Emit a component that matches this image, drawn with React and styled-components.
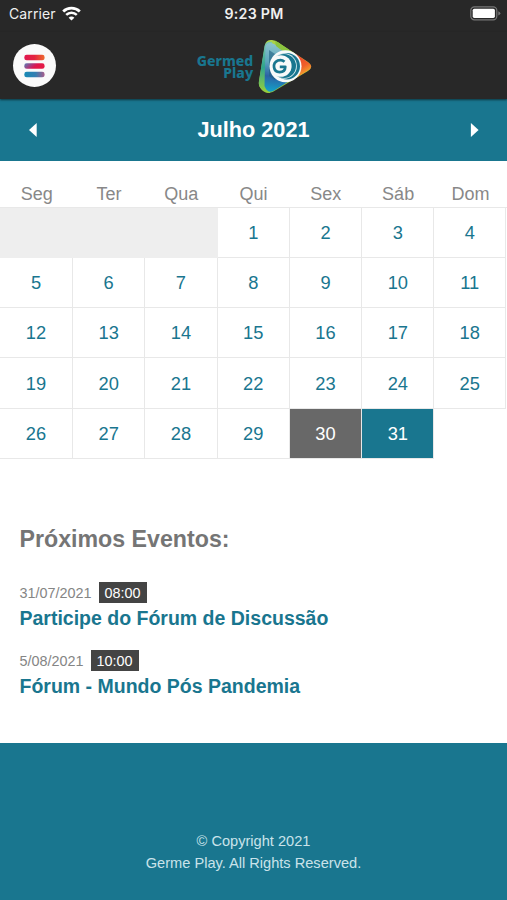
import React from "react";
import styled, { createGlobalStyle } from "styled-components";

const teal = "#19768f";
const dark = "#282828";

const GlobalStyle = createGlobalStyle`
  * { box-sizing: border-box; }
  body {
    margin: 0;
    background: #fff;
    font-family: "Liberation Sans", Arial, sans-serif;
  }
`;

const Screen = styled.div`
  display: flex;
  flex-direction: column;
  width: 507px;
  height: 900px;
  overflow: hidden;
  background: #fff;
`;

const StatusBar = styled.div`
  display: grid;
  grid-template-columns: 1fr auto 1fr;
  align-items: center;
  height: 32px;
  padding: 0 6px 5px 9px;
  background: ${dark};
  color: #f0f0f0;
  font-family: Inter, sans-serif;
  flex: none;
`;

const Carrier = styled.div`
  display: flex;
  align-items: center;
  gap: 6px;
  font-size: 14px;
  line-height: 20px;
  letter-spacing: 0.1px;
`;

const Clock = styled.div`
  margin-right: 2px;
  font-size: 14.2px;
  font-weight: 600;
  line-height: 20px;
  letter-spacing: 0.25px;
`;

const BatteryIcon = styled.svg`
  justify-self: end;
`;

const Header = styled.header`
  display: grid;
  grid-template-columns: 1fr auto 1fr;
  align-items: center;
  height: 67px;
  padding: 0 13px;
  background: ${dark};
  box-shadow: 0 1px 2px rgba(0, 0, 0, 0.55);
  z-index: 1;
  flex: none;
`;

const MenuButton = styled.button`
  display: flex;
  align-items: center;
  justify-content: center;
  width: 43px;
  height: 43px;
  padding: 0;
  border: 0;
  border-radius: 50%;
  background: #fafafa;
`;

const Brand = styled.div`
  display: flex;
  align-items: center;
  gap: 5px;
  margin-left: 2px;
`;

const BrandName = styled.div`
  color: ${teal};
  font-family: "Noto Sans", sans-serif;
  font-size: 14px;
  font-weight: 800;
  line-height: 12px;
  text-align: right;
  padding-top: 2px;
`;

const MonthBar = styled.div`
  display: flex;
  align-items: center;
  justify-content: space-between;
  height: 62px;
  padding: 0 28px 1px;
  background: ${teal};
  color: #fff;
  flex: none;
`;

const MonthTitle = styled.h1`
  margin: 0;
  font-size: 21.7px;
  line-height: 26px;
`;

const ArrowButton = styled.button`
  display: flex;
  padding: 0;
  border: 0;
  background: none;
`;

const Weekdays = styled.div`
  display: grid;
  grid-template-columns: repeat(7, 72.3px);
  padding-top: 21px;
  height: 46px;
  color: #888;
  font-size: 18px;
  line-height: 24px;
  text-align: center;
  flex: none;
`;

const Weekday = styled.div`
  padding-left: 1px;
`;

const MonthGrid = styled.div`
  display: grid;
  grid-template-columns: 73px repeat(5, 72.3px) 71.6px;
  grid-template-rows: 50px 50px 50px 51px 50px;
  border-top: 1px solid #e8e8e8;
  flex: none;
`;

const fills = { today: "#686868", event: teal, plain: "#fff" };

const Day = styled.div`
  display: flex;
  align-items: center;
  justify-content: center;
  padding-top: 1px;
  border-right: 1px solid #e8e8e8;
  border-bottom: 1px solid #e8e8e8;
  background: ${(p) => fills[p.$kind]};
  color: ${(p) => (p.$kind === "plain" ? teal : "#fff")};
  font-size: 18.3px;
`;

const EmptyDays = styled.div`
  grid-column: span 3;
  background: #eee;
`;

const Events = styled.section`
  flex: 1;
  padding: 65px 19px 0 19.5px;
`;

const EventsTitle = styled.h2`
  margin: 0 0 28px;
  color: #757575;
  font-size: 23.2px;
  line-height: 30px;
`;

const Event = styled.article`
  height: 68.3px;
`;

const EventTime = styled.div`
  display: flex;
  align-items: center;
  gap: 7px;
  height: 21px;
  color: #858585;
  font-size: 14.4px;
`;

const TimeBadge = styled.span`
  width: 48px;
  height: 21px;
  background: #444;
  color: #fff;
  line-height: 22px;
  text-align: center;
`;

const EventName = styled.h3`
  margin: 3px 0 0;
  color: ${teal};
  font-size: 19.5px;
  line-height: 24px;
  white-space: nowrap;
`;

const Footer = styled.footer`
  height: 157px;
  padding-top: 87px;
  background: ${teal};
  color: #cae3ea;
  font-size: 14.6px;
  line-height: 22px;
  text-align: center;
  flex: none;
`;

const FooterLine = styled.div``;

const weekdays = ["Seg", "Ter", "Qua", "Qui", "Sex", "Sáb", "Dom"];
const days = Array.from({ length: 31 }, (_, i) => i + 1);
const kinds = { 30: "today", 31: "event" };
const events = [
  { date: "31/07/2021", time: "08:00", name: "Participe do Fórum de Discussão" },
  { date: "5/08/2021", time: "10:00", name: "Fórum - Mundo Pós Pandemia" },
];

function Wifi() {
  return (
    <svg width="19" height="15" viewBox="0 0 19 15" fill="none" stroke="#fff">
      <path d="M1.2 5.4C5.8 1 13.2 1 17.8 5.4" strokeWidth="2.8" />
      <path d="M4.2 8.9C7.2 6 11.8 6 14.8 8.9" strokeWidth="2.5" />
      <path d="M9.5 14.6 6.6 11.7C8.1 10.2 10.9 10.2 12.4 11.7Z" fill="#fff" stroke="none" />
    </svg>
  );
}

function Battery() {
  return (
    <BatteryIcon width="31" height="15" viewBox="0 0 31 15">
      <rect x="0.8" y="0.8" width="26" height="13" rx="3.6" fill="none" stroke="#777" strokeWidth="1.2" />
      <rect x="2.7" y="2.7" width="22.2" height="9.2" rx="1.6" fill="#fff" />
      <path d="M28.3 5.2Q30.3 6 30.3 7.3T28.3 9.5Z" fill="#777" />
    </BatteryIcon>
  );
}

function MenuIcon() {
  return (
    <svg width="21" height="24" viewBox="0 0 21 24">
      <defs>
        <linearGradient id="barTop">
          <stop offset="0" stopColor="#df1650" />
          <stop offset="0.5" stopColor="#e4243f" />
          <stop offset="1" stopColor="#ed6a2e" />
        </linearGradient>
        <linearGradient id="barMid" x1="0" y1="0" x2="1" y2="0.3">
          <stop offset="0" stopColor="#547fb9" />
          <stop offset="0.48" stopColor="#bb2c70" />
          <stop offset="0.65" stopColor="#df164c" />
          <stop offset="1" stopColor="#e41b46" />
        </linearGradient>
        <linearGradient id="barLow">
          <stop offset="0" stopColor="#1689b5" />
          <stop offset="0.55" stopColor="#347fb2" />
          <stop offset="1" stopColor="#a95c8b" />
        </linearGradient>
      </defs>
      <rect x="0.3" y="0.8" width="20.3" height="5.5" rx="2.4" fill="url(#barTop)" />
      <rect x="0.3" y="9.3" width="20.3" height="5.5" rx="2.4" fill="url(#barMid)" />
      <rect x="0.3" y="17.8" width="20.3" height="5.5" rx="2.4" fill="url(#barLow)" />
    </svg>
  );
}

function PlayLogo() {
  return (
    <svg width="54" height="56" viewBox="0 0 54 56">
      <defs>
        <linearGradient id="playBody" x1="0.2" y1="0" x2="0.1" y2="1">
          <stop offset="0" stopColor="#8fc5cf" />
          <stop offset="0.4" stopColor="#5aa5bb" />
          <stop offset="0.68" stopColor="#2b62a5" />
          <stop offset="1" stopColor="#12a4c9" />
        </linearGradient>
        <linearGradient id="playEdge" x1="0" y1="0" x2="0.9" y2="0.8">
          <stop offset="0" stopColor="#b6d94c" />
          <stop offset="0.7" stopColor="#8fc043" />
          <stop offset="1" stopColor="#b5cf3a" />
        </linearGradient>
        <linearGradient id="playLeft" x1="0" y1="0" x2="0" y2="1">
          <stop offset="0" stopColor="#7cc6b0" />
          <stop offset="0.5" stopColor="#2fa58e" />
          <stop offset="1" stopColor="#9ad137" />
        </linearGradient>
        <linearGradient id="playTip" x1="0" y1="0" x2="0.4" y2="1">
          <stop offset="0" stopColor="#e8442f" />
          <stop offset="0.6" stopColor="#ef5f2a" />
          <stop offset="1" stopColor="#f3b52f" />
        </linearGradient>
      </defs>
      <path d="M7 7Q8 2 13 2Q17 1.500 21 5L50 24Q56 28.500 50 33L18 52Q11 57.500 5 53Q0 49 1 43Z" fill="url(#playEdge)" />
      <path d="M6.500 8Q8 3 14 4L18 31L12 55Q7 55 4 51Q0 49 1 43Z" fill="url(#playLeft)" />
      <path d="M7.500 8Q10 3 16 6L48 25Q52 29 47 33L17 52Q10 57 6.500 48Z" fill="url(#playBody)" />
      <path d="M17 3Q20 3.500 24 7L36 15L31 18L18 8Z" fill="#8bc43f" />
      <path d="M38 16L51 25Q56 29 50 32.500L38 40Z" fill="url(#playTip)" />
      <path d="M11 12L17 16V42L11 38Z" fill="#205f82" opacity="0.6" />
      <circle cx="27.5" cy="28.2" r="16" fill="#f8fafa" />
      <circle cx="28.8" cy="28.2" r="13.2" fill={teal} />
      <circle cx="26.2" cy="28" r="12.7" fill="#d9edf0" />
      <circle cx="26" cy="28" r="12" fill={teal} />
      <circle cx="22.800" cy="28" r="10.800" fill="#f8fafa" />
      <path d="M26.5 23.8Q23.5 21 19.800 22.600C14 25.200 15 34 21.600 34.200Q27.200 34.200 27.300 28.800H21.800" fill="none" stroke={teal} strokeWidth="2.7" strokeLinejoin="round" />
    </svg>
  );
}

function Arrow({ direction }) {
  return (
    <svg width="9" height="16" viewBox="0 0 9 16">
      <path d={direction === "left" ? "M8.7 1V15L1 8Z" : "M0.9 1V15L8.6 8Z"} fill="#fff" />
    </svg>
  );
}

export default function App() {
  return (
    <Screen>
      <GlobalStyle />
      <StatusBar>
        <Carrier>Carrier <Wifi /></Carrier>
        <Clock>9:23 PM</Clock>
        <Battery />
      </StatusBar>
      <Header>
        <MenuButton aria-label="Menu"><MenuIcon /></MenuButton>
        <Brand>
          <BrandName>Germed<br />Play</BrandName>
          <PlayLogo />
        </Brand>
      </Header>
      <MonthBar>
        <ArrowButton aria-label="Anterior"><Arrow direction="left" /></ArrowButton>
        <MonthTitle>Julho 2021</MonthTitle>
        <ArrowButton aria-label="Próximo"><Arrow direction="right" /></ArrowButton>
      </MonthBar>
      <Weekdays>
        {weekdays.map((name) => <Weekday key={name}>{name}</Weekday>)}
      </Weekdays>
      <MonthGrid>
        <EmptyDays />
        {days.map((day) => <Day key={day} $kind={kinds[day] || "plain"}>{day}</Day>)}
      </MonthGrid>
      <Events>
        <EventsTitle>Próximos Eventos:</EventsTitle>
        {events.map((event) => (
          <Event key={event.name}>
            <EventTime>{event.date}<TimeBadge>{event.time}</TimeBadge></EventTime>
            <EventName>{event.name}</EventName>
          </Event>
        ))}
      </Events>
      <Footer>
        <FooterLine>© Copyright 2021</FooterLine>
        <FooterLine>Germe Play. All Rights Reserved.</FooterLine>
      </Footer>
    </Screen>
  );
}
